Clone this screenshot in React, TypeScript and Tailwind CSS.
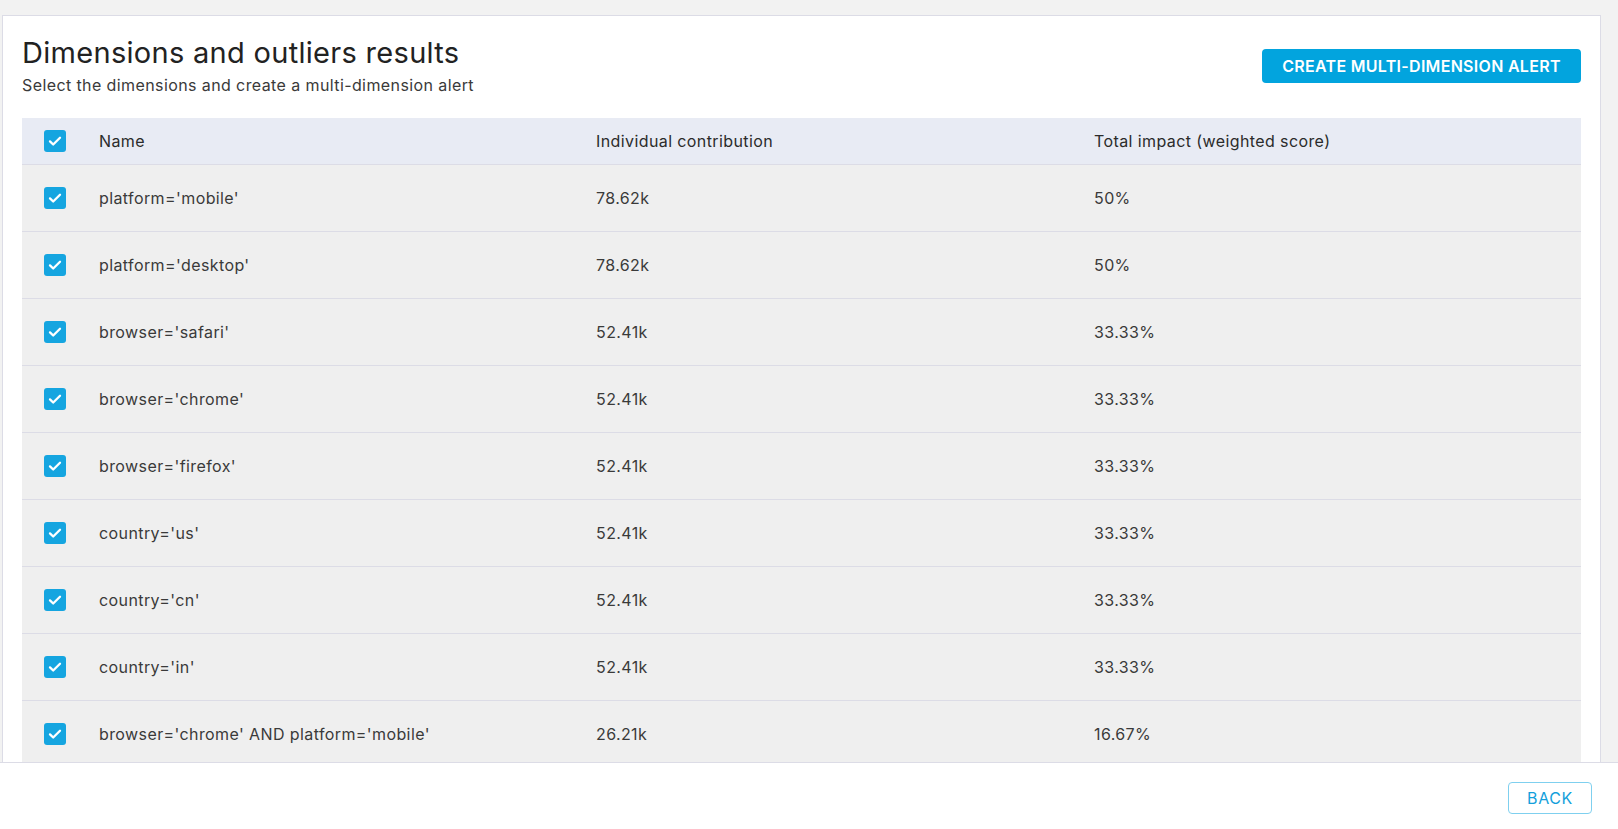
import { Fragment } from "react";

const rows = [
  { name: "platform='mobile'", contribution: "78.62k", impact: "50%" },
  { name: "platform='desktop'", contribution: "78.62k", impact: "50%" },
  { name: "browser='safari'", contribution: "52.41k", impact: "33.33%" },
  { name: "browser='chrome'", contribution: "52.41k", impact: "33.33%" },
  { name: "browser='firefox'", contribution: "52.41k", impact: "33.33%" },
  { name: "country='us'", contribution: "52.41k", impact: "33.33%" },
  { name: "country='cn'", contribution: "52.41k", impact: "33.33%" },
  { name: "country='in'", contribution: "52.41k", impact: "33.33%" },
  {
    name: "browser='chrome' AND platform='mobile'",
    contribution: "26.21k",
    impact: "16.67%",
  },
];

function Checkbox() {
  return (
    <span className="flex h-[22px] w-[22px] items-center justify-center rounded-[3px] bg-[#15a5e0]">
      <svg width="16" height="16" viewBox="0 0 16 16" fill="none">
        <path
          d="M3 8.4l3.2 3.1L13 4.8"
          stroke="white"
          strokeWidth="2.3"
          strokeLinecap="round"
          strokeLinejoin="round"
        />
      </svg>
    </span>
  );
}

export default function App() {
  return (
    <div
      className="flex h-screen flex-col overflow-hidden bg-white text-[#3a3a3a]"
      style={{ fontFamily: "Inter, 'Noto Sans', sans-serif" }}
    >
      <main className="flex-1 overflow-hidden bg-[#f2f2f2] pl-[2px] pr-[17px] pt-[15px]">
        <div className="border border-[#dcdce6] bg-white px-[19px] pt-[20px]">
          <div className="flex items-start justify-between">
            <div>
              <h1 className="text-[29px] leading-[34px] font-normal tracking-[0.3px] text-[#222]">
                Dimensions and outliers results
              </h1>
              <p className="mt-[5px] text-[16px] leading-[20px] tracking-[0.4px] text-[#3a3a3a]">
                Select the dimensions and create a multi-dimension alert
              </p>
            </div>
            <button className="mt-[13px] h-[34px] w-[319px] rounded-[4px] bg-[#02a4de] text-[16px] font-semibold tracking-[0.3px] text-white">
              CREATE MULTI-DIMENSION ALERT
            </button>
          </div>

          <div className="mt-[23px] grid grid-cols-[77px_497px_498px_1fr] text-[16px] tracking-[0.4px]">
            <div className="flex h-[47px] items-center border-b border-[#dcdce6] bg-[#e8ebf4] pl-[22px]">
              <Checkbox />
            </div>
            <div className="flex h-[47px] items-center border-b border-[#dcdce6] bg-[#e8ebf4] text-[#2b2b2b]">
              Name
            </div>
            <div className="flex h-[47px] items-center border-b border-[#dcdce6] bg-[#e8ebf4] text-[#2b2b2b]">
              Individual contribution
            </div>
            <div className="flex h-[47px] items-center border-b border-[#dcdce6] bg-[#e8ebf4] text-[#2b2b2b]">
              Total impact (weighted score)
            </div>

            {rows.map((row, i) => (
              <Fragment key={i}>
                <div className="flex h-[67px] items-center border-b border-[#dcdce6] bg-[#efefef] pl-[22px]">
                  <Checkbox />
                </div>
                <div className="flex h-[67px] items-center border-b border-[#dcdce6] bg-[#efefef]">
                  {row.name}
                </div>
                <div className="flex h-[67px] items-center border-b border-[#dcdce6] bg-[#efefef]">
                  {row.contribution}
                </div>
                <div className="flex h-[67px] items-center border-b border-[#dcdce6] bg-[#efefef]">
                  {row.impact}
                </div>
              </Fragment>
            ))}
          </div>
        </div>
      </main>

      <footer className="flex h-[67px] shrink-0 items-start justify-end border-t border-[#dcdce6] bg-white pr-[26px] pt-[19px]">
        <button className="h-[32px] w-[84px] rounded-[4px] border border-[#7fd0ef] text-[16px] tracking-[0.6px] text-[#139fdb]">
          BACK
        </button>
      </footer>
    </div>
  );
}
